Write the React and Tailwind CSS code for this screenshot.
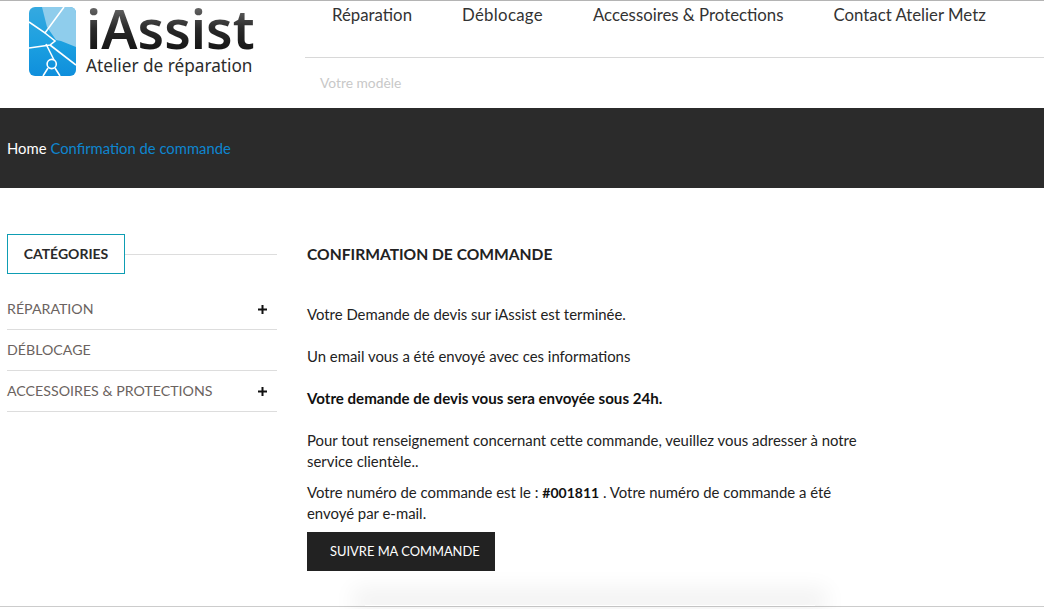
import React from 'react';

const Logo = () => (
  <div className="flex items-start">
    <svg width="47" height="69" viewBox="0 0 47 69" className="mt-[6px] shrink-0">
      <defs>
        <linearGradient id="phone" x1="0" y1="0" x2="0" y2="1">
          <stop offset="0" stopColor="#35a9e0" />
          <stop offset="0.55" stopColor="#1b9fe0" />
          <stop offset="1" stopColor="#0f8fdc" />
        </linearGradient>
      </defs>
      <rect x="0" y="0" width="47" height="69" rx="6" fill="url(#phone)" />
      <path d="M13 0 L41 0 Q47 0 47 6 L47 40 L32 34 L27 33 L18 20 Z" fill="#8fcdec" />
      <g stroke="#fff" strokeWidth="1.6" fill="none">
        <path d="M35 0 L16 26 L0 15" />
        <path d="M16 26 L26 34 L21 38 L0 41" />
        <path d="M21 38 L47 58" />
        <path d="M17 37 L25 53" />
        <circle cx="22.7" cy="57" r="4.6" />
        <path d="M19 61 L14 69 M26 61 L31 69" />
      </g>
    </svg>
    <div className="ml-[10px] flex flex-col">
      <span className="text-[54px] leading-[52px] h-[53px] mt-[1px] font-['Noto_Sans',sans-serif] font-semibold bg-gradient-to-b from-[#777] via-[#2a2a2a] to-[#111] bg-clip-text text-transparent">iAssist</span>
      <span className="text-[17.2px] leading-[22px] font-['Noto_Sans',sans-serif] text-[#2c2c2c]">Atelier de réparation</span>
    </div>
  </div>
);

const Plus = () => (
  <svg width="9" height="9" viewBox="0 0 9 9" className="mr-[10px] mt-[1px]">
    <path d="M0 4.5H9M4.5 0V9" stroke="#111" strokeWidth="2" />
  </svg>
);

const SideItem = ({ label, plus }) => (
  <div className="h-[41px] flex items-center justify-between border-b border-[#ddd] text-[14.2px] text-[#6b6360] pb-[1px]">
    <span>{label}</span>
    {plus && <Plus />}
  </div>
);

export default function App() {
  return (
    <div className="h-[609px] overflow-hidden bg-white font-['Lato',sans-serif] relative">
      <header className="h-[108px] border-t border-[#b4b4b4] flex">
        <div className="w-[305px] shrink-0 pl-[29px]">
          <Logo />
        </div>
        <div className="flex-1">
          <nav className="h-[57px] flex border-b border-[#d8d8d8] pl-[27px] pt-[3px] text-[16.8px] leading-[22px] text-[#333]">
            <a className="mr-[50px]">Réparation</a>
            <a className="mr-[50px] tracking-[0.3px]">Déblocage</a>
            <a className="mr-[50px]">Accessoires &amp; Protections</a>
            <a>Contact Atelier Metz</a>
          </nav>
          <div className="pl-[15px] pt-[15px] text-[13.8px] leading-[20px] text-[#c8c8c8]">Votre modèle</div>
        </div>
      </header>

      <div className="h-[80px] bg-[#2b2b2b] flex items-center pl-[7px] text-[14.8px]">
        <span className="text-white mr-[4px]">Home</span>
        <span className="text-[#0e86d0]">Confirmation de commande</span>
      </div>

      <main className="flex pt-[46px]">
        <aside className="w-[270px] ml-[7px] shrink-0">
          <div className="flex items-center">
            <div className="w-[118px] h-[40px] border border-[#0e9db3] flex items-center justify-center text-[14px] font-bold text-[#2a2a2a] pb-[1px]">CATÉGORIES</div>
            <div className="flex-1 h-px bg-[#ddd]" />
          </div>
          <div className="mt-[15px]">
            <SideItem label="RÉPARATION" plus />
            <SideItem label="DÉBLOCAGE" />
            <SideItem label="ACCESSOIRES & PROTECTIONS" plus />
          </div>
        </aside>

        <section className="ml-[30px] w-[555px] text-[14.9px] leading-[21px] text-[#222]">
          <h1 className="text-[15.6px] leading-[40px] font-bold text-[#222]">CONFIRMATION DE COMMANDE</h1>
          <p className="mt-[30px]">Votre Demande de devis sur iAssist est terminée.</p>
          <p className="mt-[21px]">Un email vous a été envoyé avec ces informations</p>
          <p className="mt-[21px] text-[15.1px] font-bold text-[#111]">Votre demande de devis vous sera envoyée sous 24h.</p>
          <p className="mt-[21px]">Pour tout renseignement concernant cette commande, veuillez vous adresser à notre service clientèle..</p>
          <p className="mt-[10px]">Votre numéro de commande est le : <strong className="text-[#111] text-[14px]">#001811</strong> . Votre numéro de commande a été envoyé par e-mail.</p>
          <button className="mt-[8px] w-[188px] h-[39px] bg-[#222] text-white text-[12.9px] text-left pl-[23px]">SUIVRE MA COMMANDE</button>
        </section>
      </main>

      <div className="absolute left-0 right-0 bottom-[2px] h-px bg-[#ccc]" />
      <div className="absolute left-[365px] w-[450px] bottom-[3px] h-[1px] shadow-[0_-5px_22px_12px_rgba(0,0,0,0.055)]" />
    </div>
  );
}
